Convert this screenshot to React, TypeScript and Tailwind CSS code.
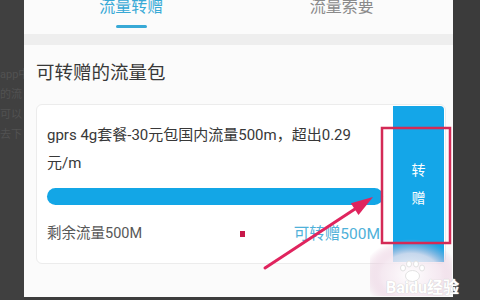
import React from "react";

const font = { fontFamily: 'Roboto, "Noto Sans CJK SC", sans-serif' };

function SidePanel() {
  return (
    <div className="w-[24px] h-full bg-[#404040] overflow-hidden pt-[68px] flex flex-col gap-[6px] text-[11px] leading-[14px] text-[#525252] whitespace-nowrap">
      <div>app中</div>
      <div>的流</div>
      <div>可以</div>
      <div>去下</div>
    </div>
  );
}

function Tabs() {
  return (
    <div className="h-[34px] bg-[#fbfbfb] grid grid-cols-2">
      <div className="flex flex-col items-center">
        <div className="-mt-[4px] text-[16px] leading-[22px] text-[#38a9d6]">流量转赠</div>
        <div className="mt-[7px] w-[31px] h-[3px] rounded-full bg-[#38a9d6]" />
      </div>
      <div className="flex flex-col items-center pr-[8px]">
        <div className="-mt-[4px] text-[16px] leading-[22px] text-[#8a8a8a]">流量索要</div>
      </div>
    </div>
  );
}

function PackageCard() {
  return (
    <div className="mt-[19px] mr-[7px] h-[160px] rounded-md border border-[#ececec] bg-white flex">
      <div className="flex-1 pl-[10px] pr-[10px] pt-[16px]">
        <div className="text-[15px] leading-[28px] text-[#383838]">
          gprs 4g套餐-30元包国内流量500m，超出0.29
          <br />
          元/m
        </div>
        <div className="mt-[11px] h-[17px] rounded-full bg-[#13a6e6]" />
        <div className="mt-[21px] flex items-center text-[14.5px] leading-[16px]">
          <span className="text-[#585858]">剩余流量500M</span>
          <span className="ml-[98px] w-[5px] h-[6px] bg-[#c8184a]" />
          <span className="ml-auto mr-[3px] text-[15.5px] text-[#4fb1d9]">可转赠500M</span>
        </div>
      </div>
      <div className="w-[51px] my-[1px] mr-[1px] rounded-tr-[4px] bg-[#14a6e8] flex flex-col items-center pt-[55px] gap-[10px] text-[14px] leading-[18px] text-white">
        <span>转</span>
        <span>赠</span>
      </div>
    </div>
  );
}

function Overlay() {
  return (
    <svg className="absolute inset-0 pointer-events-none" width="480" height="300" viewBox="0 0 480 300">
      <defs>
        <radialGradient id="wm" cx="0.5" cy="0.65" r="0.6">
          <stop offset="0" stopColor="#ffffff" stopOpacity="0.95" />
          <stop offset="0.6" stopColor="#f3e4ee" stopOpacity="0.8" />
          <stop offset="1" stopColor="#d9a3c4" stopOpacity="0" />
        </radialGradient>
      </defs>
      <rect x="370" y="236" width="82" height="60" fill="url(#wm)" />
      <rect x="382" y="128" width="68" height="115" fill="none" stroke="#d42a56" strokeWidth="2.5" />
      <line x1="265" y1="268" x2="358" y2="207" stroke="#e0245e" strokeWidth="3" strokeLinecap="round" />
      <polygon points="373,197 350.8,203.2 358.5,215" fill="#e0245e" />
      <g fill="#ffffff" stroke="#dadada" strokeWidth="0.8">
        <ellipse cx="403" cy="268" rx="2.5" ry="3" />
        <ellipse cx="409" cy="264" rx="2.5" ry="3" />
        <ellipse cx="416" cy="264" rx="2.5" ry="3" />
        <ellipse cx="422" cy="268" rx="2.5" ry="3" />
        <ellipse cx="412.5" cy="276" rx="7" ry="5.5" />
      </g>
    </svg>
  );
}

export default function App() {
  return (
    <div className="relative w-[480px] h-[300px] overflow-hidden bg-[#3d3d3d] flex" style={font}>
      <SidePanel />
      <div className="w-[429px] h-[297px] bg-[#fbfbfb] flex flex-col overflow-hidden">
        <Tabs />
        <div className="h-[11px] bg-[#eeeeee]" />
        <div className="flex-1 pl-[12px] pt-[16px] bg-[#fbfbfb]">
          <div className="text-[18.5px] leading-[24px] text-[#383838]">可转赠的流量包</div>
          <PackageCard />
        </div>
      </div>
      <div className="flex-1 h-full bg-[#3b3b3b]" />
      <Overlay />
      <div
        className="absolute left-[386px] top-[279px] text-[16px] leading-[18px] font-bold text-white whitespace-nowrap"
        style={{ textShadow: "0 0 1px #cfcfcf, 0 0 1px #cfcfcf" }}
      >
        Baidu经验
      </div>
    </div>
  );
}
